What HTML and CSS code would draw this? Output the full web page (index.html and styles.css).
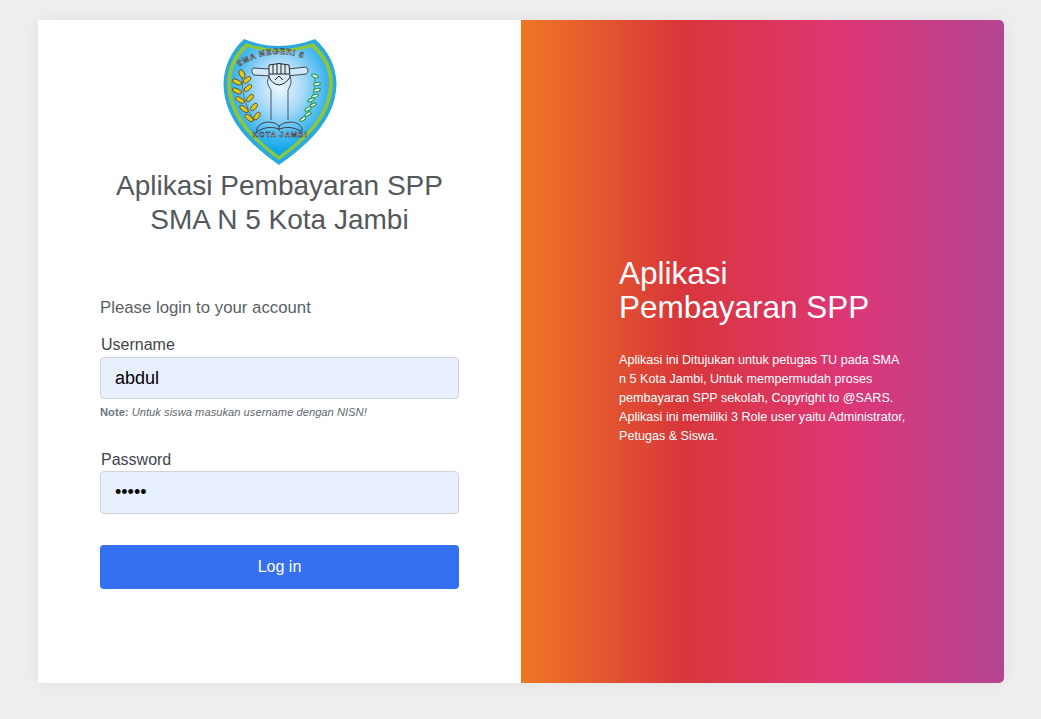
FILE: index.html
```html
<!DOCTYPE html>
<html>
<head>
    <title>Aplikasi Pembayaran SPP</title>
    <link rel="stylesheet" href="styles.css">
</head>
<body>
    <div class="card">
        <div class="login-side">
            <div class="brand">
                <svg class="logo" viewBox="0 0 114 127" width="114" height="127">
                    <defs>
                        <radialGradient id="sky" cx="50%" cy="36%" r="60%">
                            <stop offset="0" stop-color="#eef8fe"/>
                            <stop offset="0.4" stop-color="#a9daf8"/>
                            <stop offset="0.8" stop-color="#3db4ee"/>
                            <stop offset="1" stop-color="#0aa8e6"/>
                        </radialGradient>
                        <path id="arc" d="M14 30 Q56 2 100 30"/>
                    </defs>
                    <path d="M21 1 Q38 8 56 8 Q74 8 92 1 Q113 20 113.500 46 C113 84 80 110 56 127 C32 110 1 84 0.500 46 Q1 20 21 1Z" fill="#29a9e0"/>
                    <path d="M23 5 Q39 11 56 11 Q73 11 90 5 Q110 22 110 46 C109 82 78 106 56 122 C34 106 5 82 4 46 Q4 22 23 5Z" fill="#8cc63f"/>
                    <path d="M25 9 Q40 14 56 14 Q72 14 88 9 Q106 24 106 46 C105 80 76 103 56 118 C36 103 9 80 8 46 Q8 24 25 9Z" fill="url(#sky)"/>

                    <text class="logo-text" font-size="8" letter-spacing="0.900"><textPath href="#arc" startOffset="2">SMA NEGERI 5</textPath></text>

                    <!-- scroll and fist -->
                    <path d="M30 30 L47 31 L47 38 L31 37 Q27 33 30 30Z" fill="#cfe9fa" stroke="#333" stroke-width="0.900"/>
                    <path d="M65 31 L83 29 Q87 33 83 36 L65 38Z" fill="#cfe9fa" stroke="#333" stroke-width="0.900"/>
                    <path d="M46 27 Q56 24 66 27 L67 39 Q63 46 56 47 Q49 46 46 39Z" fill="#dcecf6" stroke="#222" stroke-width="1"/>
                    <path d="M50 27 V36 M54 26 V36 M58 26 V36 M62 27 V36 M46 36 H66 M52 42 L56 38 L60 42" stroke="#222" stroke-width="1" fill="none"/>
                    <path d="M46 39 Q42 44 48 52 M67 39 Q70 44 65 52" stroke="#444" stroke-width="0.900" fill="none"/>

                    <!-- column -->
                    <path d="M48 52 V82 M65 52 V82" stroke="#444" stroke-width="0.900" fill="none"/>

                    <!-- book -->
                    <path d="M34 90 Q38 84 46 84 Q53 84 56 88 Q60 84 68 84 Q75 84 79 90 M35 93 Q45 87 56 91 Q67 87 78 93 M34 90 V94 M79 90 V94 M56 88 V93" stroke="#333" stroke-width="0.900" fill="none"/>

                    <text class="logo-text" x="57" y="99" text-anchor="middle" font-size="7.500" letter-spacing="0.900">KOTA JAMBI</text>

                    <!-- left laurel, yellow leaves -->
                    <g class="leaf-left">
                        <path d="M31 83 Q18 62 19 36" fill="none"/>
                        <ellipse cx="19" cy="36" rx="2.500" ry="4.500" transform="rotate(-25 19 36)"/>
                        <ellipse cx="24" cy="42" rx="4.500" ry="2.200" transform="rotate(-35 24 42)"/>
                        <ellipse cx="14" cy="44" rx="5" ry="2.200" transform="rotate(25 14 44)"/>
                        <ellipse cx="25" cy="50" rx="4.500" ry="2.200" transform="rotate(-40 25 50)"/>
                        <ellipse cx="14" cy="53" rx="5" ry="2.200" transform="rotate(25 14 53)"/>
                        <ellipse cx="27" cy="60" rx="4.500" ry="2.200" transform="rotate(-45 27 60)"/>
                        <ellipse cx="17" cy="62" rx="5" ry="2.200" transform="rotate(30 17 62)"/>
                        <ellipse cx="31" cy="69" rx="4.500" ry="2.200" transform="rotate(-50 31 69)"/>
                        <ellipse cx="21" cy="71" rx="5" ry="2.200" transform="rotate(35 21 71)"/>
                        <ellipse cx="34" cy="78" rx="4.500" ry="2.200" transform="rotate(-55 34 78)"/>
                        <ellipse cx="26" cy="80" rx="5" ry="2.200" transform="rotate(40 26 80)"/>
                    </g>

                    <!-- right laurel, green and white leaves -->
                    <g class="leaf-right">
                        <path d="M81 81 Q93 62 92 36" fill="none"/>
                        <ellipse cx="92" cy="38" rx="3.500" ry="1.500" transform="rotate(20 92 38)"/>
                        <ellipse cx="94" cy="46" rx="3.500" ry="1.500" transform="rotate(-15 94 46)"/>
                        <ellipse cx="94" cy="52" rx="3.500" ry="1.500" transform="rotate(-15 94 52)"/>
                        <ellipse cx="92" cy="58" rx="3.500" ry="1.500" transform="rotate(-20 92 58)"/>
                        <ellipse cx="88" cy="62" rx="3.500" ry="1.500" transform="rotate(-25 88 62)"/>
                        <ellipse cx="90" cy="67" rx="3.500" ry="1.500" transform="rotate(-25 90 67)"/>
                        <ellipse cx="85" cy="71" rx="3.500" ry="1.500" transform="rotate(-30 85 71)"/>
                        <ellipse cx="85" cy="76" rx="3.500" ry="1.500" transform="rotate(-30 85 76)"/>
                        <ellipse cx="80" cy="81" rx="3.500" ry="1.500" transform="rotate(-35 80 81)"/>
                    </g>
                </svg>
                <h1 class="brand-title">Aplikasi Pembayaran SPP<br>SMA N 5 Kota Jambi</h1>
            </div>

            <form class="login-form" onsubmit="event.preventDefault()">
                <p class="lead">Please login to your account</p>

                <div class="field">
                    <label for="username">Username</label>
                    <input type="text" id="username" value="abdul">
                    <small class="hint"><b>Note:</b> <i>Untuk siswa masukan username dengan NISN!</i></small>
                </div>

                <div class="field field-password">
                    <label for="password">Password</label>
                    <input type="password" id="password" value="abdul">
                </div>

                <button type="submit">Log in</button>
            </form>
        </div>

        <div class="info-side">
            <h2>Aplikasi<br>Pembayaran SPP</h2>
            <p>Aplikasi ini Ditujukan untuk petugas TU pada SMA n 5 Kota Jambi, Untuk mempermudah proses pembayaran SPP sekolah, Copyright to @SARS. Aplikasi ini memiliki 3 Role user yaitu Administrator, Petugas &amp; Siswa.</p>
        </div>
    </div>
</body>
</html>
```

FILE: styles.css
```css
* {
    box-sizing: border-box;
}

body {
    margin: 0;
    height: 719px;
    padding: 20px 37px 36px 38px;
    background: #eeeeee;
    font-family: "Liberation Sans", Arial, sans-serif;
    overflow: hidden;
}

.card {
    display: flex;
    height: 663px;
    background: white;
    border-radius: 0 5px 5px 0;
    box-shadow: 0 0 20px rgba(0, 0, 0, 0.06);
}

.login-side {
    width: 483px;
    padding: 18px 62px 0 62px;
}

.brand {
    display: flex;
    flex-direction: column;
    align-items: center;
}

.logo {
    display: block;
}

.brand-title {
    margin: 4px 0 0 0;
    font-size: 28px;
    line-height: 33.600px;
    font-weight: normal;
    text-align: center;
    color: #53585d;
    white-space: nowrap;
}

.logo-text {
    font-family: "Liberation Sans", Arial, sans-serif;
    font-weight: bold;
    fill: #e8f4fb;
    stroke: #222;
    stroke-width: 0.500;
}

.leaf-left ellipse {
    fill: #e0c81e;
    stroke: #4a4a20;
    stroke-width: 0.800;
}

.leaf-left path {
    stroke: #4a4a20;
    stroke-width: 0.600;
}

.leaf-right ellipse {
    fill: #f4faf4;
    stroke: #1f9a4e;
    stroke-width: 1.100;
}

.leaf-right path {
    stroke: #1f9a4e;
    stroke-width: 0.800;
}

.login-form {
    margin-top: 62px;
}

.lead {
    margin: 0 0 17px 0;
    font-size: 16.800px;
    line-height: 20px;
    color: #5a5f64;
}

.field {
    margin-bottom: 31px;
}

.field label {
    display: block;
    margin-bottom: 2px;
    padding-left: 1px;
    font-size: 16px;
    line-height: 20px;
    color: #3f454b;
}

.field-password label {
    margin-bottom: 1px;
}

.field input {
    display: block;
    width: 100%;
    height: 42px;
    padding: 0 14px;
    background: #e8f0fe;
    border: 1px solid #ced4da;
    border-radius: 4px;
    color: black;
    font-family: "Liberation Sans", Arial, sans-serif;
    font-size: 18px;
}

#password {
    height: 43px;
}

.hint {
    display: block;
    margin-top: 7px;
    font-size: 11.200px;
    line-height: 13px;
    color: #6c757d;
}

.hint i {
    color: #5f686f;
}

button {
    display: block;
    width: 100%;
    height: 44px;
    background: #3570f3;
    color: white;
    border: none;
    border-radius: 4px;
    cursor: pointer;
    font-family: "Liberation Sans", Arial, sans-serif;
    font-size: 16px;
}

.info-side {
    display: flex;
    flex: 1;
    flex-direction: column;
    justify-content: center;
    padding: 0 98px 1px 98px;
    color: white;
    background: linear-gradient(to right, #ee7724, #d8363a, #dd3675, #b44593);
    border-radius: 0 5px 5px 0;
}

.info-side h2 {
    margin: 0 0 27px 0;
    font-size: 31.500px;
    line-height: 34px;
    font-weight: normal;
    white-space: nowrap;
}

.info-side p {
    margin: 0;
    font-size: 12.600px;
    line-height: 19px;
}
```
